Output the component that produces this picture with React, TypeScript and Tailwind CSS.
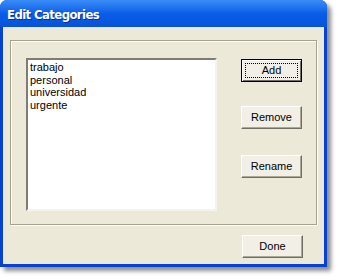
import React from "react";

const font = { fontFamily: '"Liberation Sans", Arial, sans-serif' };

function Btn({ label, def }: { label: string; def?: boolean }) {
  return (
    <div
      className={
        "w-[61px] h-[23px] flex items-center justify-center text-[11px] text-black bg-[#F1EFE6] " +
        (def
          ? "border border-black shadow-[inset_1px_1px_0_#fff,inset_-1px_-1px_0_#716F64]"
          : "border border-t-white border-l-white border-r-[#716F64] border-b-[#716F64] shadow-[inset_-1px_-1px_0_#ACA899]")
      }
      style={font}
    >
      {def ? (
        <div className="w-[53px] h-[15px] border border-dotted border-black flex items-center justify-center">
          {label}
        </div>
      ) : (
        label
      )}
    </div>
  );
}

export default function App() {
  return (
    <div className="w-[340px] h-[280px] bg-white overflow-hidden">
      <div className="w-[327px] h-[267px] flex flex-col rounded-t-[7px] bg-[#0842D0] shadow-[4px_4px_4px_rgba(0,0,0,0.45)]">
        <div className="h-[27px] rounded-t-[7px] bg-gradient-to-b from-[#3A8CF7] via-[#0A5DE8] to-[#0653D8] flex items-center pl-[7px] pt-[2px] shrink-0">
          <span
            className="text-white font-bold text-[13px] [text-shadow:1px_1px_0_#0B2F8C]"
            style={{ fontFamily: '"DejaVu Sans Condensed", "DejaVu Sans", sans-serif', letterSpacing: "-0.6px" }}
          >
            Edit Categories
          </span>
        </div>
        <div className="flex-1 mx-[3px] mb-[3px] bg-[#ECE9D8] flex flex-col">
          <div className="mt-[13px] ml-[7px] w-[307px] h-[185px] border border-[#A5A28F] shadow-[inset_1px_1px_0_#fff,1px_1px_0_#fff] flex">
            <div className="mt-[17px] ml-[15px] w-[191px] h-[153px] bg-white border-2 border-t-[#7F7D73] border-l-[#7F7D73] border-r-[#F4F3EE] border-b-[#F4F3EE] pl-[2px] pt-[1px]">
              {["trabajo", "personal", "universidad", "urgente"].map((t) => (
                <div key={t} className="text-[11px] leading-[12.5px] text-black" style={font}>
                  {t}
                </div>
              ))}
            </div>
            <div className="ml-[24px] mt-[18px] flex flex-col">
              <Btn label="Add" def />
              <div className="h-[24px]" />
              <Btn label="Remove" />
              <div className="h-[26px]" />
              <Btn label="Rename" />
            </div>
          </div>
          <div className="mt-[10px] ml-[239px]">
            <Btn label="Done" />
          </div>
        </div>
      </div>
    </div>
  );
}
